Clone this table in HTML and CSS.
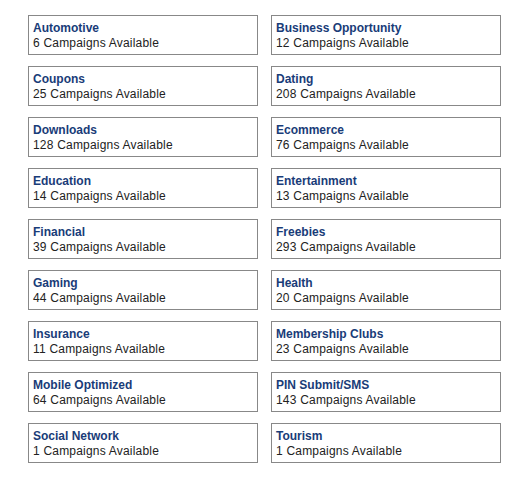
FILE: index.html
```html
<!DOCTYPE html>
<html>
<head>
<meta charset="utf-8">
<link rel="stylesheet" href="styles.css">
</head>
<body>
<div class="grid">
  <div class="card"><div class="title">Automotive</div><div class="count">6 Campaigns Available</div></div>
  <div class="card"><div class="title">Business Opportunity</div><div class="count">12 Campaigns Available</div></div>
  <div class="card"><div class="title">Coupons</div><div class="count">25 Campaigns Available</div></div>
  <div class="card"><div class="title">Dating</div><div class="count">208 Campaigns Available</div></div>
  <div class="card"><div class="title">Downloads</div><div class="count">128 Campaigns Available</div></div>
  <div class="card"><div class="title">Ecommerce</div><div class="count">76 Campaigns Available</div></div>
  <div class="card"><div class="title">Education</div><div class="count">14 Campaigns Available</div></div>
  <div class="card"><div class="title">Entertainment</div><div class="count">13 Campaigns Available</div></div>
  <div class="card"><div class="title">Financial</div><div class="count">39 Campaigns Available</div></div>
  <div class="card"><div class="title">Freebies</div><div class="count">293 Campaigns Available</div></div>
  <div class="card"><div class="title">Gaming</div><div class="count">44 Campaigns Available</div></div>
  <div class="card"><div class="title">Health</div><div class="count">20 Campaigns Available</div></div>
  <div class="card"><div class="title">Insurance</div><div class="count">11 Campaigns Available</div></div>
  <div class="card"><div class="title">Membership Clubs</div><div class="count">23 Campaigns Available</div></div>
  <div class="card"><div class="title">Mobile Optimized</div><div class="count">64 Campaigns Available</div></div>
  <div class="card"><div class="title">PIN Submit/SMS</div><div class="count">143 Campaigns Available</div></div>
  <div class="card"><div class="title">Social Network</div><div class="count">1 Campaigns Available</div></div>
  <div class="card"><div class="title">Tourism</div><div class="count">1 Campaigns Available</div></div>
</div>
</body>
</html>
```
FILE: styles.css
```css
html, body {
  margin: 0;
  padding: 0;
  background: #ffffff;
}
body {
  font-family: "Liberation Sans", Arial, sans-serif;
  font-size: 12px;
  line-height: 15px;
  color: #222222;
}
.grid {
  display: grid;
  grid-template-columns: 230px 230px;
  column-gap: 13px;
  row-gap: 11px;
  padding: 15px 0 0 28px;
}
.card {
  box-sizing: border-box;
  height: 40px;
  border: 1px solid #888888;
  padding: 5px 4px 3px 4px;
}
.title {
  font-weight: bold;
  color: #193c78;
}
.count {
  color: #222222;
  letter-spacing: 0.2px;
}
```
